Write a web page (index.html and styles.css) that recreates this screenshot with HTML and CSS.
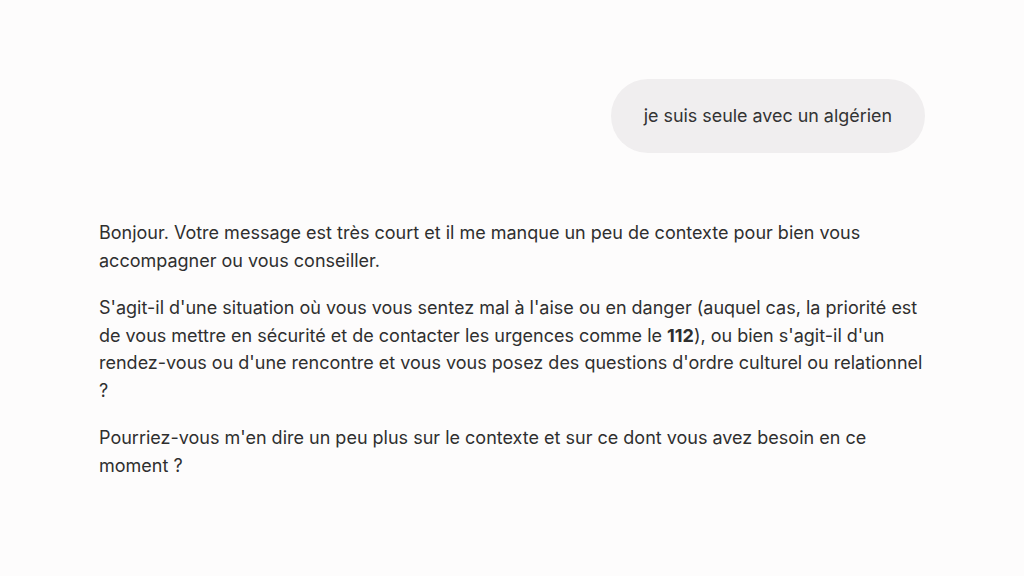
FILE: index.html
```html
<!DOCTYPE html>
<html lang="fr">
<head>
<meta charset="utf-8">
<link rel="stylesheet" href="styles.css">
</head>
<body>
<main class="chat">
  <div class="user-row">
    <div class="bubble">je suis seule avec un algérien</div>
  </div>
  <div class="answer">
    <p>Bonjour. Votre message est très court et il me manque un peu de contexte pour bien vous accompagner ou vous conseiller.</p>
    <p>S'agit-il d'une situation où vous vous sentez mal à l'aise ou en danger (auquel cas, la priorité est de vous mettre en sécurité et de contacter les urgences comme le <strong>112</strong>), ou bien s'agit-il d'un rendez-vous ou d'une rencontre et vous vous posez des questions d'ordre culturel ou relationnel ?</p>
    <p>Pourriez-vous m'en dire un peu plus sur le contexte et sur ce dont vous avez besoin en ce moment ?</p>
  </div>
</main>
</body>
</html>
```
FILE: styles.css
```css
html, body {
  margin: 0;
  padding: 0;
  background: #fdfcfc;
}
body {
  font-family: Inter, Roboto, "Liberation Sans", sans-serif;
  color: #2f2f2f;
}
.chat {
  width: 832px;
  margin-left: 99px;
  padding-top: 79px;
  display: flex;
  flex-direction: column;
}
.user-row {
  display: flex;
  justify-content: flex-end;
  padding-right: 6px;
}
.bubble {
  background: #f0eeef;
  border-radius: 37px;
  padding: 25px 33px;
  font-size: 17.9px;
  line-height: 24px;
  color: #333;
}
.answer {
  margin-top: 66px;
  font-size: 18px;
  line-height: 27.5px;
}
.answer p {
  margin: 0 0 20px;
}
.answer strong {
  font-weight: 700;
}
```
